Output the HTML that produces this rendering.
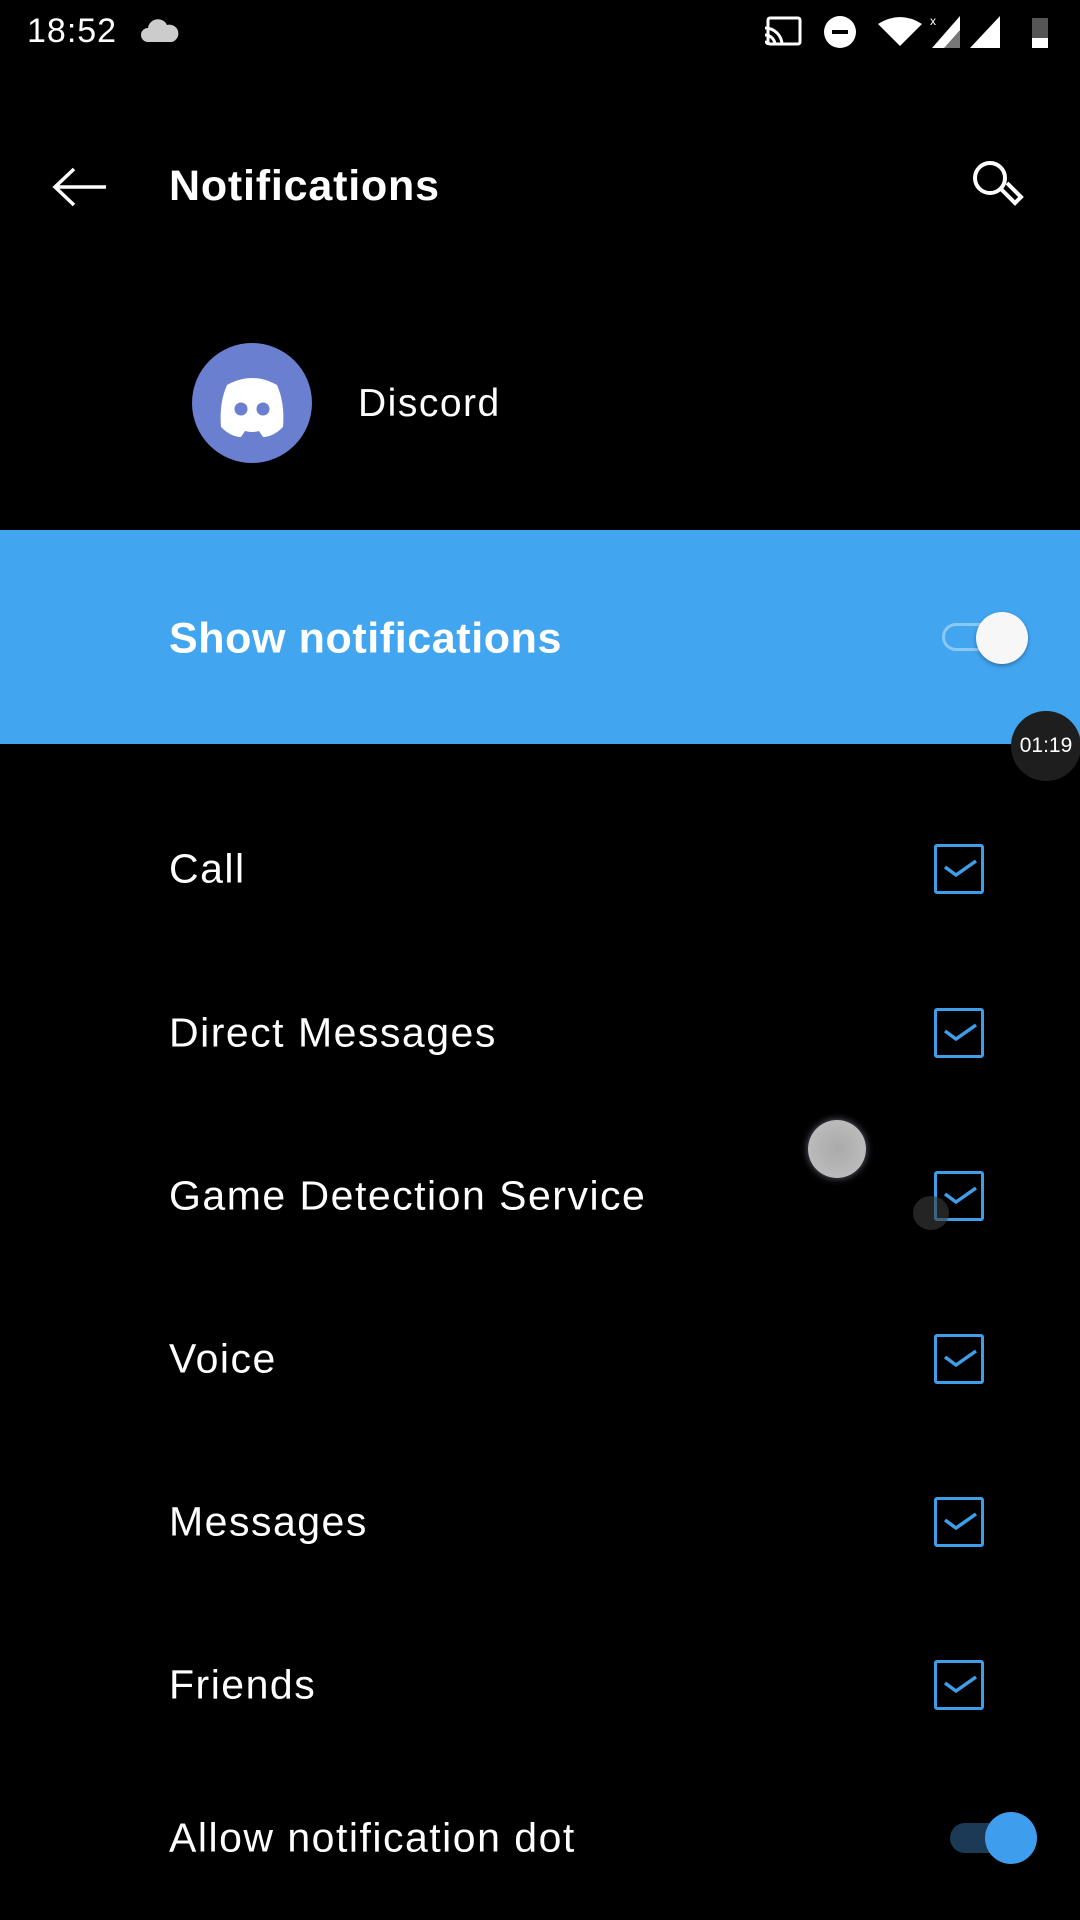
<!DOCTYPE html>
<html><head><meta charset="utf-8"><style>
html,body{margin:0;padding:0;background:#000;}
body{width:1080px;height:1920px;position:relative;overflow:hidden;font-family:"Liberation Sans",sans-serif;color:#fff;}
.a{position:absolute;}
.t{position:absolute;left:169px;font-size:41px;letter-spacing:1.5px;transform:translateY(-50%);white-space:nowrap;}
.cb{position:absolute;left:934px;width:44px;height:44px;border:3px solid #3f9ee8;border-radius:3px;}
</style></head><body>
<div class="a" style="left:27px;top:12px;font-size:34px;letter-spacing:1px;">18:52</div>
<svg class="a" style="left:140px;top:18px" width="40" height="26" viewBox="0 0 40 26"><path d="M8 24a7 7 0 0 1 0-14a10 10 0 0 1 19-3a8 8 0 0 1 5 17z" fill="#ccc"/></svg>
<svg class="a" style="left:762px;top:14px" width="300" height="36" viewBox="0 0 300 36">
<rect x="6" y="4" width="32" height="26" rx="2" fill="none" stroke="#fff" stroke-width="3"/>
<path d="M3 14a17 17 0 0 1 17 17M3 21a10 10 0 0 1 10 10M3 28a3 3 0 0 1 3 3" stroke="#fff" stroke-width="3" fill="none"/>
<circle cx="78" cy="18" r="16" fill="#fff"/><rect x="70" y="16" width="16" height="4" fill="#000"/>
<path d="M116 10q22-14 44 0l-22 22z" fill="#fff"/>
<path d="M170 34l28-32v32z" fill="#fff"/><path d="M182 34l16-18v18z" fill="#777"/>
<text x="168" y="11" font-size="12" fill="#fff" font-family="Liberation Sans">x</text>
<path d="M208 34l30-32v32z" fill="#fff"/>
<rect x="270" y="4" width="16" height="30" fill="#555"/><rect x="270" y="24" width="16" height="10" fill="#fff"/>
</svg>
<svg class="a" style="left:52px;top:166px" width="56" height="42" viewBox="0 0 56 42"><path d="M54 21H4M22 3L3 21l19 18" stroke="#fff" stroke-width="3.5" fill="none"/></svg>
<div class="a" style="left:169px;top:162px;font-size:43px;font-weight:bold;letter-spacing:0.8px;">Notifications</div>
<svg class="a" style="left:970px;top:158px" width="62" height="58" viewBox="0 0 62 58"><circle cx="20" cy="20" r="15" stroke="#fff" stroke-width="4" fill="none"/><path d="M31 31l14 14l6-6l-14-14" stroke="#fff" stroke-width="4" fill="none"/></svg>
<svg class="a" style="left:192px;top:343px" width="120" height="120" viewBox="0 0 120 120"><circle cx="60" cy="60" r="60" fill="#6a7fcf"/>
<path d="M35 42q25-14 50 0q8 18 6 42q-10 10-20 10l-4-6q-7 2-14 0l-4 6q-10 0-20-10q-2-24 6-42z" fill="#fff"/>
<circle cx="49" cy="66" r="6.5" fill="#6a7fcf"/><circle cx="71" cy="66" r="6.5" fill="#6a7fcf"/></svg>
<div class="a" style="left:358px;top:382px;font-size:39px;letter-spacing:1.5px;">Discord</div>
<div class="a" style="left:0;top:530px;width:1080px;height:214px;background:#42a5f0;"></div>
<div class="t" style="top:639px;font-size:43px;font-weight:bold;letter-spacing:0.6px;">Show notifications</div>
<div class="a" style="left:942px;top:623px;width:72px;height:28px;border-radius:14px;border:3px solid #8cc8f5;box-sizing:border-box;"></div>
<div class="a" style="left:976px;top:612px;width:52px;height:52px;border-radius:50%;background:#f7f7f7;box-shadow:0 2px 4px rgba(0,0,0,.3);"></div>
<div class="a" style="left:1011px;top:711px;width:70px;height:70px;border-radius:50%;background:#1e1e1e;font-size:21px;line-height:70px;text-align:center;">01:19</div>
<div class="t" style="top:869px">Call</div><div class="cb" style="top:844px"></div>
<div class="t" style="top:1033px">Direct Messages</div><div class="cb" style="top:1008px"></div>
<div class="t" style="top:1196px">Game Detection Service</div><div class="cb" style="top:1171px"></div>
<div class="t" style="top:1359px">Voice</div><div class="cb" style="top:1334px"></div>
<div class="t" style="top:1522px">Messages</div><div class="cb" style="top:1497px"></div>
<div class="t" style="top:1685px">Friends</div><div class="cb" style="top:1660px"></div>
<svg class="a" style="left:0;top:0" width="1080" height="1920">
<g stroke="#3f9ee8" stroke-width="3.5" fill="none">
<path d="M945 867l11 8l20-14"/><path d="M945 1031l11 8l20-14"/><path d="M945 1194l11 8l20-14"/>
<path d="M945 1357l11 8l20-14"/><path d="M945 1520l11 8l20-14"/><path d="M945 1683l11 8l20-14"/></g></svg>
<div class="a" style="left:808px;top:1120px;width:58px;height:58px;border-radius:50%;background:radial-gradient(#aaa,#bbb 70%,#ccd 85%);box-shadow:0 0 8px #667;"></div>
<div class="a" style="left:913px;top:1196px;width:36px;height:34px;border-radius:50%;background:rgba(60,60,60,.6);"></div>
<div class="t" style="top:1838px">Allow notification dot</div>
<div class="a" style="left:950px;top:1823px;width:72px;height:30px;border-radius:15px;background:#1c3a55;"></div>
<div class="a" style="left:985px;top:1812px;width:52px;height:52px;border-radius:50%;background:#3e9ded;"></div>
</body></html>
